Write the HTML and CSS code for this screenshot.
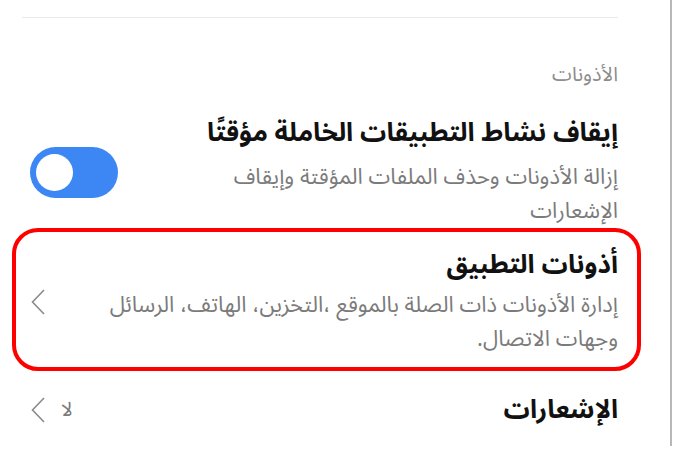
FILE: index.html
```html
<!doctype html>
<html lang="ar" dir="rtl">
<head>
	<meta charset="UTF-8">
	<title>الأذونات</title>
	<link rel="stylesheet" href="styles.css">
</head>
<body>
	<div class="panel">
		<div class="divider"></div>
		<h3 class="section">الأذونات</h3>

		<div class="row row-first">
			<div class="text">
				<div class="title">إيقاف نشاط التطبيقات الخاملة مؤقتًا</div>
				<div class="sub">إزالة الأذونات وحذف الملفات المؤقتة وإيقاف الإشعارات</div>
			</div>
			<div class="end">
				<span class="switch on"><i></i></span>
			</div>
		</div>

		<div class="row active">
			<div class="text">
				<div class="title">أذونات التطبيق</div>
				<div class="sub">إدارة الأذونات ذات الصلة بالموقع ،التخزين، الهاتف، الرسائل وجهات الاتصال.</div>
			</div>
			<div class="end">
				<svg class="chev" width="14" height="26" viewBox="0 0 14 26"><polyline points="13,1 1.5,13 13,25"/></svg>
			</div>
		</div>

		<div class="row row-last">
			<div class="text">
				<div class="title">الإشعارات</div>
			</div>
			<div class="end">
				<span class="value">لا</span>
				<svg class="chev" width="14" height="26" viewBox="0 0 14 26"><polyline points="13,1 1.5,13 13,25"/></svg>
			</div>
		</div>
	</div>
</body>
</html>
```

FILE: styles.css
```css
* { margin: 0; padding: 0; box-sizing: border-box;}
body { background: #fff; font-family: "Noto Sans Arabic", "Noto Sans", "DejaVu Sans", sans-serif; color: #111;}
.panel { width: 672px; height: 446px; margin: 0 auto 0 0; border-right: 2px solid #b8b8b8; padding: 17px 29px 0 12px;}
.divider { height: 1px; background: #e9e9e9; margin: 0 23px 0 10px;}
.section { font-size: 20px; font-weight: normal; color: #8d8d8d; line-height: 24px; margin: 45px 23px 0 0;}

.row { display: flex; align-items: center; gap: 40px; padding: 0 23px 0 18px;}
.row .text { flex: 1;}
.row .title { font-size: 26px; font-weight: bold; line-height: 34px; color: #111;}
.row .sub { font-size: 22px; line-height: 34px; color: #7b7b7b; margin-top: 6px;}
.row .end { display: flex; align-items: center; gap: 16px;}

.row-first { padding-top: 29px;}
.row-first .sub { margin-top: 10px;}
.row.active { border: 4px solid #f00; border-radius: 26px; padding: 16px 19px 11px 14px;}
.active .end { padding-left: 1px;}
.row-last { margin-top: 22px; padding-left: 19px;}

.switch { display: block; direction: ltr; width: 88px; height: 51px; border-radius: 26px; background: #3d87f4; padding: 7px 6px;}
.switch i { display: block; width: 37px; height: 37px; border-radius: 50%; background: #fff;}
.chev { display: block; fill: none; stroke: #8a8a8a; stroke-width: 1.6;}
.value { font-size: 20px; color: #7b7b7b; line-height: 26px;}
```
